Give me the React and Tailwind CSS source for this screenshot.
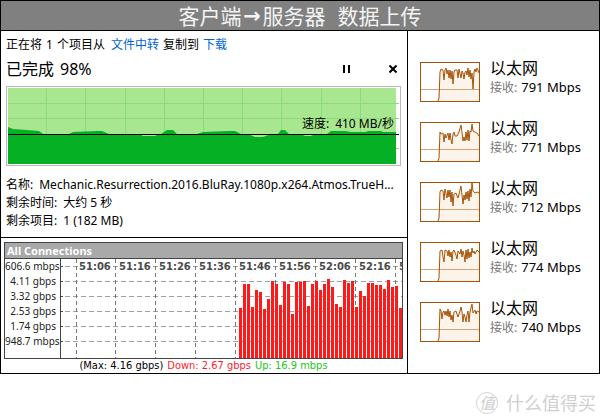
import React from "react";

const BAR_TOPS = [
  50, 26, 26, 49, 32, 34, 51, 41, 23, 26, 47, 24, 26, 56, 24, 24, 23, 48, 26, 23, 32,
  26, 21, 29, 46, 49, 22, 25, 23, 49, 33, 38, 25, 25, 27, 27, 31, 22, 29, 28, 50,
];

const RATE_LABELS = ["606.6 mbps", "4.11 gbps", "3.32 gbps", "2.53 gbps", "1.74 gbps", "948.7 mbps"];
const TIME_LABELS = ["51:06", "51:16", "51:26", "51:36", "51:46", "51:56", "52:06", "52:16", "52:26"];

const ADAPTERS = [
  {
    rate: "791 Mbps",
    line: "20,10 21,7 23,8 24,18 25,8 26,6 27,12 28,8 29,16 30,8 31,17 32,9 33,22 34,10 35,8 37,8 38,16 39,7 41,16 42,9 43,11 44,17 45,10 46,9 47,13 48,6 49,15 50,8 51,17 52,11 53,27 54,10 55,7 56,10 57,6 58,8 59,11",
  },
  {
    rate: "771 Mbps",
    line: "20,10 21,12 23,11 24,20 25,12 26,16 28,11 29,18 30,11 31,18 32,22 33,12 34,10 35,14 37,14 39,10 41,3 42,10 43,19 44,15 45,19 46,10 47,18 48,8 49,19 50,9 51,10 52,2 53,9 55,10 57,11 59,14",
  },
  {
    rate: "712 Mbps",
    line: "20,10 21,8 23,9 24,18 25,7 27,16 28,8 29,15 30,8 31,20 32,10 33,24 34,12 36,11 38,16 40,8 41,4 42,13 43,22 44,13 45,18 46,10 47,17 48,9 49,19 50,7 51,15 52,1 53,9 55,11 57,10 59,11",
  },
  {
    rate: "774 Mbps",
    line: "20,9 22,8 23,15 24,20 25,8 27,9 28,14 29,8 30,15 31,10 32,19 33,9 34,8 36,13 37,17 38,9 40,12 41,7 42,15 43,9 44,13 45,20 46,8 47,17 48,7 49,16 50,10 51,15 52,6 53,11 54,9 55,12 57,8 59,10",
  },
  {
    rate: "740 Mbps",
    line: "20,7 21,9 22,17 23,10 24,9 25,13 26,9 27,14 28,7 29,15 30,9 31,18 32,13 33,20 34,10 36,9 38,15 40,9 41,5 42,10 43,20 44,12 45,15 46,20 47,13 48,9 49,20 50,10 52,2 53,11 55,8 56,12 57,9 59,10",
  },
];

function SpeedChart() {
  return (
    <div className="relative mt-0.5 h-20 border border-[#bababa] bg-white">
      <svg className="block h-full w-full" viewBox="0 0 393 78" preserveAspectRatio="none" aria-hidden="true">
        <rect x="1" y="1" width="388" height="76" fill="#a8e690" />
        <path
          d="M39.5 1V77M78.5 1V77M118.5 1V77M157.5 1V77M196.5 1V77M235.5 1V77M274.5 1V77M314.5 1V77M353.5 1V77M1 16.5H392M1 31.5H392M1 61.5H392"
          stroke="#89dc77"
          fill="none"
        />
        <path
          d="M1 77V40L6 42L20 43L32 44L36 47H62L66 45L90 44H95L102 47H133L136 49H148L152 47H154L160 43H166L170 47H190L196 45L222 44H228L234 47H241L248 50H256L264 47L271 47L274 43H278L282 47H294L298 49H304L308 47H320L324 44H338L344 45H358L362 44H374L376 45H389V77Z"
          fill="#06b025"
        />
        <path d="M1 47.5H392" stroke="#000" />
      </svg>
      <p className="absolute top-7 right-1.5 flex gap-1.5">
        <span>速度:</span>
        <span>410 MB/秒</span>
      </p>
    </div>
  );
}

function Detail({ label, children }) {
  return (
    <div className="flex gap-1.5">
      <dt className="shrink-0">{label}:</dt>
      <dd className="min-w-0 truncate">{children}</dd>
    </div>
  );
}

function CopyDialog() {
  return (
    <section className="border-b border-black pt-[5px] pr-1.5 pb-[7px] pl-[5px] text-[12px] leading-[18px]">
      <p className="flex gap-1">
        <span>正在将</span>
        <span>1</span>
        <span>个项目从</span>
        <a href="#source" className="ml-0.5 text-[#0066cc]">文件中转</a>
        <span>复制到</span>
        <a href="#target" className="text-[#0066cc]">下载</a>
      </p>
      <div className="flex h-[30px] items-center">
        <h2 className="flex flex-1 gap-1.5 text-[16px]">
          <span>已完成</span>
          <span>98%</span>
        </h2>
        <button type="button" aria-label="暂停" className="mr-[30px] flex h-4 w-4 items-center justify-center">
          <svg width="8" height="8" aria-hidden="true">
            <path d="M0 0H2V8H0ZM5 0H7V8H5Z" />
          </svg>
        </button>
        <button type="button" aria-label="取消" className="flex h-4 w-4 items-center justify-center">
          <svg width="8" height="8" viewBox="0 0 8 8" aria-hidden="true">
            <path d="M0.5 0.5L7.5 7.5M7.5 0.5L0.5 7.5" stroke="#000" strokeWidth="2" />
          </svg>
        </button>
      </div>
      <SpeedChart />
      <dl className="mt-2.5">
        <Detail label="名称">Mechanic.Resurrection.2016.BluRay.1080p.x264.Atmos.TrueH...</Detail>
        <Detail label="剩余时间">大约 5 秒</Detail>
        <Detail label="剩余项目">1 (182 MB)</Detail>
      </dl>
    </section>
  );
}

function ConnectionsPanel() {
  return (
    <section className="pt-1 pr-1 pl-[3px] font-['DejaVu_Sans_Condensed','DejaVu_Sans',sans-serif] text-[11px]">
      <div className="border border-[#444]">
        <h2 className="h-4 border-b border-[#444] bg-[#a9a9a9] px-0.5 font-['Noto_Sans',sans-serif] text-[11px] leading-[15px] font-bold text-white">
          All Connections
        </h2>
        <div className="flex h-[99px]">
          <ul className="w-[55px] pr-1 text-right font-['Noto_Sans',sans-serif] text-[10px] leading-[15px] whitespace-nowrap text-[#222]">
            {RATE_LABELS.map((label) => (
              <li key={label}>{label}</li>
            ))}
          </ul>
          <div className="relative flex-1 overflow-hidden">
            <svg className="block h-full w-full" viewBox="0 0 342 99" preserveAspectRatio="none" aria-hidden="true">
              <path
                d="M-3 7.5H342M-3 22.5H342M-3 37.5H342M-3 52.5H342M-3 67.5H342M-3 82.5H342"
                stroke="#a0a0a0"
                strokeDasharray="5 3"
              />
              <path
                d="M16.5 0V99M55.5 0V99M95.5 0V99M135.5 0V99M175.5 0V99M215.5 0V99M255.5 0V99M295.5 0V99M335.5 0V99"
                stroke="#777"
                strokeDasharray="4 3"
              />
              <path d="M0.5 0V99M0 7.5H3M0 22.5H3M0 37.5H3M0 52.5H3M0 67.5H3M0 82.5H3" stroke="#444" />
              {BAR_TOPS.map((top, i) => (
                <rect key={i} x={179 + i * 4} y={top - 1} width="3" height={100 - top} fill="#ff1a1a" />
              ))}
            </svg>
            <ul className="absolute top-0 left-[19px] flex font-['DejaVu_Sans',sans-serif] text-[10px] leading-[15px] font-bold text-[#4a4a4a]">
              {TIME_LABELS.map((label) => (
                <li key={label} className="w-10 shrink-0">
                  <span className="bg-white">{label}</span>
                </li>
              ))}
            </ul>
          </div>
        </div>
      </div>
      <p className="flex h-3.5 justify-center gap-1 leading-[14px]">
        <span>(Max: 4.16 gbps)</span>
        <span className="text-[#ff1a2e]">Down: 2.67 gbps</span>
        <span className="text-[#22c522]">Up: 16.9 mbps</span>
      </p>
    </section>
  );
}

function Adapter({ rate, line }) {
  return (
    <li className="flex h-[60px] gap-2.5">
      <svg className="mt-[5px] shrink-0" width="60" height="40" viewBox="0 0 60 40" aria-hidden="true">
        <polygon points={`18,39 19,28 ${line} 59,39`} fill="#fcf3eb" />
        <path d="M1 27.5H59" stroke="#cfa476" />
        <polyline points={`18,39 19,36 ${line}`} fill="none" stroke="#a75307" strokeWidth="1" />
        <rect x="0.5" y="0.5" width="59" height="39" fill="none" stroke="#a75307" />
      </svg>
      <div>
        <h3 className="text-[16px] leading-[22px]">以太网</h3>
        <p className="flex items-baseline gap-1 text-[12px] leading-4">
          <span className="text-[#777]">接收:</span>
          <span className="text-[13px]">{rate}</span>
        </p>
      </div>
    </li>
  );
}

function Watermark() {
  return (
    <footer className="mt-4 flex items-center justify-end gap-2 pr-1 text-[18px] leading-[26px] text-[#cfcfcf]">
      <span className="flex h-[22px] w-[22px] items-center justify-center rounded-full border border-[#d4d4d4] text-[16px] italic">
        值
      </span>
      <span>什么值得买</span>
    </footer>
  );
}

export default function App() {
  return (
    <div className="bg-white font-['Noto_Sans','Noto_Sans_CJK_SC',sans-serif] text-black">
      <main className="border border-black">
        <h1 className="flex h-[30px] items-center justify-center border-b border-black bg-[#808080] text-[21px] leading-[28px] text-[#f4f4f4]">
          <span>客户端</span>
          <span className="w-[21px] text-center font-['DejaVu_Sans',sans-serif] font-bold">→</span>
          <span>服务器</span>
          <span className="ml-3">数据上传</span>
        </h1>
        <div className="flex">
          <div className="min-w-0 flex-1">
            <CopyDialog />
            <ConnectionsPanel />
          </div>
          <ul className="w-48 shrink-0 border-l border-black pt-[26px] pl-3">
            {ADAPTERS.map((adapter) => (
              <Adapter key={adapter.rate} {...adapter} />
            ))}
          </ul>
        </div>
      </main>
      <Watermark />
    </div>
  );
}
